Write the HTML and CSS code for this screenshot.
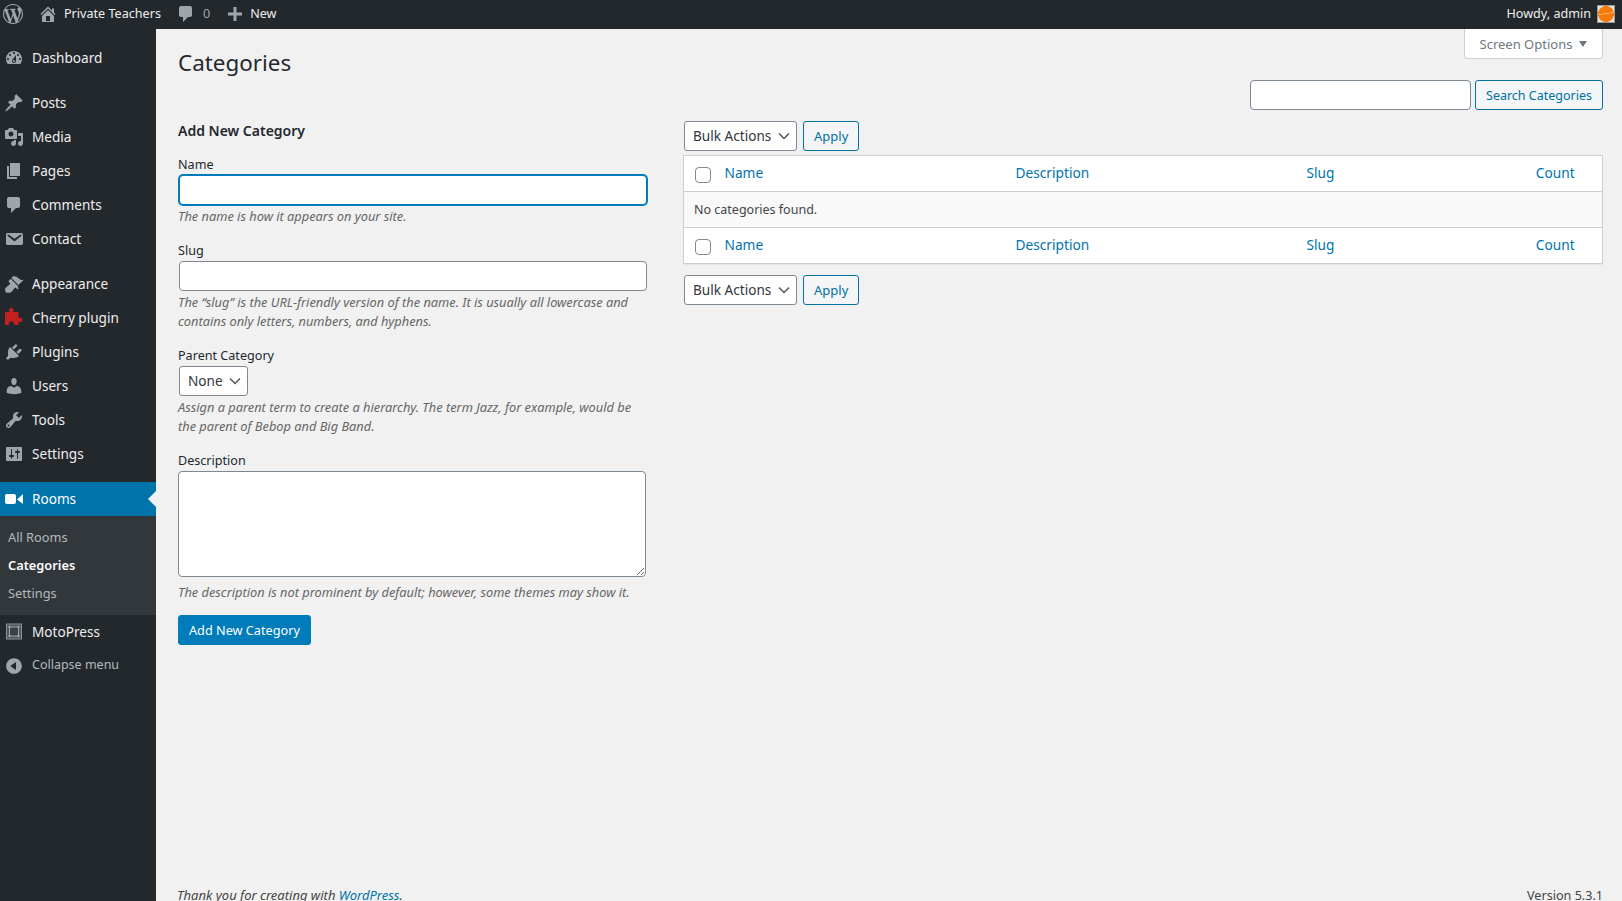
FILE: index.html
```html
<!DOCTYPE html>
<html lang="en">
<head>
    <meta charset="UTF-8">
    <meta name="viewport" content="width=device-width, initial-scale=1.0">
    <title>Categories</title>
    <link rel="stylesheet" href="styles.css">
</head>
<body>
    <!-- Admin bar -->
    <header class="adminbar">
        <a class="bar-item bar-logo" href="#"><svg class="bar-icon logo-icon" viewBox="0 0 20 20"><path d="M20 10c0-5.51-4.49-10-10-10C4.48 0 0 4.49 0 10c0 5.52 4.48 10 10 10 5.51 0 10-4.48 10-10zM7.78 15.37L4.37 6.22c.55-.02 1.17-.08 1.17-.08.5-.06.44-1.13-.06-1.11 0 0-1.45.11-2.37.11-.18 0-.37 0-.58-.01C4.12 2.69 6.87 1.11 10 1.11c2.33 0 4.45.87 6.05 2.34-.68-.11-1.65.39-1.65 1.58 0 .74.45 1.36.9 2.1.35.61.55 1.36.55 2.46 0 1.49-1.4 5-1.4 5l-3.03-8.37c.54-.02.82-.17.82-.17.5-.05.44-1.25-.06-1.22 0 0-1.44.12-2.38.12-.87 0-2.33-.12-2.33-.12-.5-.03-.56 1.2-.06 1.22l.92.08 1.26 3.41zM17.41 10c.24-.64.74-1.87.43-4.25.7 1.29 1.05 2.71 1.05 4.25 0 3.29-1.73 6.24-4.4 7.78.97-2.59 1.94-5.2 2.92-7.78zM6.1 18.09C3.12 16.65 1.11 13.53 1.11 10c0-1.3.23-2.48.72-3.59C3.25 10.3 4.67 14.2 6.1 18.09zm4.03-6.63l2.58 6.98c-.86.29-1.76.45-2.71.45-.79 0-1.57-.11-2.29-.33.81-2.38 1.62-4.74 2.42-7.1z"/></svg></a>
        <a class="bar-item bar-site" href="#"><svg class="bar-icon" viewBox="0 0 20 20"><path d="M16 8.5l1.53 1.53-1.06 1.06L10 4.62l-6.47 6.47-1.06-1.06L10 2.5l4 4v-2h2v4zm-6-2.46l6 5.99V18H4v-5.97zM12 17v-5H8v5h4z"/></svg>Private Teachers</a>
        <a class="bar-item bar-comments" href="#"><svg class="bar-icon" viewBox="0 0 20 20"><path d="M5 2h9c1.1 0 2 .9 2 2v7c0 1.1-.9 2-2 2h-2l-5 5v-5H5c-1.1 0-2-.9-2-2V4c0-1.1.9-2 2-2z"/></svg><span class="bar-count">0</span></a>
        <a class="bar-item bar-new" href="#"><svg class="bar-icon" viewBox="0 0 20 20"><path d="M3 8.5h5.5V3h3v5.500H17v3h-5.500V17h-3v-5.500H3z"/></svg>New</a>
        <a class="bar-item bar-user" href="#">Howdy, admin<span class="avatar"></span></a>
    </header>

    <div class="wrap">
        <!-- Sidebar -->
        <nav class="sidebar">
            <ul class="menu">
                <li class="menu-item"><svg class="menu-icon" viewBox="0 0 20 20"><path d="M3.76 16h12.48c1.1-1.37 1.76-3.11 1.76-5 0-4.42-3.58-8-8-8s-8 3.58-8 8c0 1.89.66 3.63 1.76 5zM10 4c.55 0 1 .45 1 1s-.45 1-1 1-1-.45-1-1 .45-1 1-1zM6 6c.55 0 1 .45 1 1s-.45 1-1 1-1-.45-1-1 .45-1 1-1zm8 0c.55 0 1 .45 1 1s-.45 1-1 1-1-.45-1-1 .45-1 1-1zm-5.370 5.550L12 7v6c0 1.100-.9 2-2 2s-2-.9-2-2c0-.57.24-1.080.63-1.450zM4 10c.55 0 1 .45 1 1s-.45 1-1 1-1-.45-1-1 .45-1 1-1zm12 0c.55 0 1 .45 1 1s-.45 1-1 1-1-.45-1-1 .45-1 1-1zm-5 3c0-.55-.45-1-1-1s-1 .45-1 1 .45 1 1 1 1-.45 1-1z" fill-rule="evenodd"/></svg>Dashboard</li>
                <li class="menu-sep"></li>
                <li class="menu-item"><svg class="menu-icon" viewBox="0 0 20 20"><path d="M10.44 3.020l1.820-1.820 6.360 6.350-1.830 1.820c-1.050-.68-2.480-.57-3.410.36l-.75.75c-.92.93-1.040 2.350-.35 3.410l-1.830 1.820-2.410-2.410-2.800 2.790c-.42.42-3.380 2.710-3.800 2.290s1.860-3.390 2.280-3.810l2.790-2.790L4.100 9.360l1.830-1.820c1.050.69 2.480.57 3.400-.36l.75-.75c.93-.92 1.050-2.350.36-3.410z"/></svg>Posts</li>
                <li class="menu-item"><svg class="menu-icon" viewBox="0 0 20 20"><path d="M13 11V4c0-.55-.45-1-1-1h-1.670L9 1H5L3.670 3H2c-.55 0-1 .45-1 1v7c0 .55.45 1 1 1h10c.55 0 1-.45 1-1zM7 4.500c1.380 0 2.500 1.120 2.500 2.500S8.380 9.500 7 9.500 4.500 8.380 4.500 7 5.620 4.500 7 4.500zM14 6h5v10.500c0 1.380-1.120 2.500-2.500 2.500S14 17.880 14 16.500s1.120-2.500 2.500-2.500c.17 0 .34.02.5.05V9h-3V6zm-4 8.050V13h2v3.500c0 1.380-1.120 2.500-2.500 2.500S7 17.880 7 16.500 8.120 14 9.500 14c.17 0 .34.02.5.05z"/></svg>Media</li>
                <li class="menu-item"><svg class="menu-icon" viewBox="0 0 20 20"><path d="M6 15V2h10v13H6zm-1 1h8v2H3V5h2v11z"/></svg>Pages</li>
                <li class="menu-item"><svg class="menu-icon" viewBox="0 0 20 20"><path d="M5 2h9c1.100 0 2 .9 2 2v7c0 1.100-.9 2-2 2h-2l-5 5v-5H5c-1.100 0-2-.9-2-2V4c0-1.100.9-2 2-2z"/></svg>Comments</li>
                <li class="menu-item"><svg class="menu-icon" viewBox="0 0 20 20"><path d="M3.870 4h13.250C18.370 4 19 4.590 19 5.790v8.420c0 1.190-.63 1.790-1.880 1.790H3.870c-1.250 0-1.880-.6-1.880-1.790V5.790c0-1.200.63-1.790 1.880-1.790zm6.620 8.600l6.740-5.530c.24-.2.43-.66.13-1.070-.29-.41-.82-.42-1.170-.17l-5.700 3.860L4.800 5.830c-.35-.25-.88-.24-1.170.17-.3.41-.11.87.13 1.070z"/></svg>Contact</li>
                <li class="menu-sep"></li>
                <li class="menu-item"><svg class="menu-icon" viewBox="0 0 20 20"><path d="M14.480 11.060L7.410 3.990l1.500-1.500c.5-.56 2.300-.47 3.510.32 1.210.8 1.430 1.280 2.910 2.100 1.180.64 2.450 1.260 4.450.85zm-.71.71L6.700 4.700 4.930 6.470c-.39.39-.39 1.020 0 1.410l1.060 1.060c.39.39.39 1.030 0 1.420-.6.6-1.430 1.110-2.210 1.690-.35.26-.7.53-1.010.84C1.430 13.230.4 14.960 1.800 18.200c3.240 1.400 4.970.37 6.300-.96.31-.31.58-.66.84-1.010.58-.78 1.090-1.610 1.690-2.210.39-.39 1.030-.39 1.420 0l1.060 1.060c.39.39 1.020.39 1.410 0z"/></svg>Appearance</li>
                <li class="menu-item"><svg class="menu-icon icon-cherry" viewBox="0 0 20 20"><path d="M1 4H5C5.500 4 5.500 3.500 5.300 3A2.200 2.200 0 1 1 9.300 3C9 3.500 9 4 9.500 4H14.500V9.500C14.500 10 15 10 15.500 9.900A2.200 2.200 0 1 1 15.500 14C15 13.900 14.500 14 14.500 14.500V17H10V15A2.700 2.700 0 0 0 5 15V17H1Z"/></svg>Cherry plugin</li>
                <li class="menu-item"><svg class="menu-icon" viewBox="0 0 20 20"><path d="M13.110 4.360L9.870 7.600 8 5.730l3.240-3.240c.35-.34 1.050-.2 1.560.32.52.51.66 1.210.31 1.550zm-8 1.770l.91-1.120 9.010 9.010-1.190.84c-.71.71-2.630 1.160-3.820 1.160H6.140L4.900 17.260c-.59.59-1.540.59-2.120 0-.59-.58-.59-1.530 0-2.120l1.240-1.240v-3.880c0-1.130.4-3.190 1.090-3.890zm7.260 3.970l3.240-3.240c.34-.35 1.040-.21 1.550.31.52.51.66 1.210.31 1.550l-3.240 3.250z"/></svg>Plugins</li>
                <li class="menu-item"><svg class="menu-icon" viewBox="0 0 20 20"><path d="M10 9.250c-2.270 0-2.730-3.440-2.730-3.440C7 4.020 7.820 2 9.970 2c2.160 0 2.980 2.020 2.710 3.810 0 0-.41 3.440-2.680 3.440zm0 2.570L12.720 10c2.390 0 4.520 2.330 4.520 4.530v2.490s-3.650 1.130-7.240 1.130c-3.650 0-7.240-1.130-7.240-1.130v-2.490c0-2.250 1.940-4.480 4.470-4.480z"/></svg>Users</li>
                <li class="menu-item"><svg class="menu-icon" viewBox="0 0 20 20"><path d="M16.680 9.770c-1.340 1.340-3.300 1.670-4.950.99l-5.410 6.520c-.99.99-2.590.99-3.580 0s-.99-2.590 0-3.570l6.520-5.420c-.68-1.650-.35-3.610.99-4.950 1.280-1.280 3.120-1.620 4.720-1.060l-2.890 2.890 2.820 2.820 2.860-2.870c.53 1.580.18 3.390-1.080 4.650zM3.810 16.210c.4.39 1.040.39 1.430 0 .4-.4.4-1.040 0-1.430-.39-.4-1.030-.4-1.430 0-.39.39-.39 1.030 0 1.430z"/></svg>Tools</li>
                <li class="menu-item"><svg class="menu-icon" viewBox="0 0 20 20"><path d="M18 16V4c0-.55-.45-1-1-1H3c-.55 0-1 .45-1 1v12c0 .55.45 1 1 1h14c.55 0 1-.45 1-1zM8 11h1c.55 0 1 .45 1 1s-.45 1-1 1H8v1.500c0 .28-.22.5-.5.5s-.5-.22-.5-.5V13H6c-.55 0-1-.45-1-1s.45-1 1-1h1V5.500c0-.28.22-.5.5-.5s.5.22.5.5V11zm5-2h-1c-.55 0-1-.45-1-1s.45-1 1-1h1V5.500c0-.28.22-.5.5-.5s.5.22.5.5V7h1c.55 0 1 .45 1 1s-.45 1-1 1h-1v5.500c0 .28-.22.5-.5.5s-.5-.22-.5-.5V9z"/></svg>Settings</li>
                <li class="menu-sep"></li>
                <li class="menu-item current"><svg class="menu-icon" viewBox="0 0 20 20"><path d="M12 13V7c0-1.100-.9-2-2-2H3c-1.100 0-2 .9-2 2v6c0 1.100.9 2 2 2h7c1.100 0 2-.9 2-2zm1-2.500l6 4.500V5z"/></svg>Rooms</li>
                <li>
                    <ul class="submenu">
                        <li>All Rooms</li>
                        <li class="active">Categories</li>
                        <li>Settings</li>
                    </ul>
                </li>
                <li class="menu-item"><svg class="menu-icon icon-moto" viewBox="0 0 20 20"><rect x="2.500" y="2" width="15" height="15" fill="#50555a" stroke="#8c9196"/><rect x="5.500" y="5" width="9" height="9" fill="#3c4146" stroke="#a0a5aa"/><circle cx="5.500" cy="5" r="1.200"/><circle cx="14.500" cy="5" r="1.200"/><circle cx="5.500" cy="14" r="1.200"/><circle cx="14.500" cy="14" r="1.200"/></svg>MotoPress</li>
                <li class="menu-collapse"><svg class="menu-icon" viewBox="0 0 20 20"><path d="M10 2.160c4.330 0 7.840 3.510 7.840 7.840s-3.510 7.840-7.840 7.840S2.160 14.330 2.160 10 5.710 2.160 10 2.160zm2 11.720V6.120L6.180 9.970z"/></svg>Collapse menu</li>
            </ul>
        </nav>

        <main class="content">
            <div class="page-head">
                <h1>Categories</h1>
                <button class="screen-options" type="button">Screen Options<span class="caret"></span></button>
            </div>

            <form class="search-row" onsubmit="return false">
                <input class="text-input search-input" type="text">
                <button class="btn btn-search" type="submit">Search Categories</button>
            </form>

            <div class="columns">
                <!-- Add form -->
                <form class="add-form" onsubmit="return false">
                    <h2>Add New Category</h2>
                    <div class="field">
                        <label for="tag-name">Name</label>
                        <input class="text-input focused" id="tag-name" type="text">
                        <p class="hint">The name is how it appears on your site.</p>
                    </div>
                    <div class="field">
                        <label for="tag-slug">Slug</label>
                        <input class="text-input" id="tag-slug" type="text">
                        <p class="hint">The “slug” is the URL-friendly version of the name. It is usually all lowercase and contains only letters, numbers, and hyphens.</p>
                    </div>
                    <div class="field">
                        <label for="parent">Parent Category</label>
                        <select class="select parent-select" id="parent"><option>None</option></select>
                        <p class="hint">Assign a parent term to create a hierarchy. The term Jazz, for example, would be the parent of Bebop and Big Band.</p>
                    </div>
                    <div class="field field-last">
                        <label for="tag-desc">Description</label>
                        <textarea class="text-input desc-input" id="tag-desc"></textarea>
                        <p class="hint">The description is not prominent by default; however, some themes may show it.</p>
                    </div>
                    <button class="btn-primary" type="submit">Add New Category</button>
                </form>

                <!-- List -->
                <div class="list">
                    <div class="tablenav top">
                        <select class="select bulk-select"><option>Bulk Actions</option></select>
                        <button class="btn" type="button">Apply</button>
                    </div>
                    <table class="list-table">
                        <thead>
                            <tr>
                                <th class="col-check"><span class="checkbox"></span></th>
                                <th class="col-name"><a href="#">Name</a></th>
                                <th class="col-desc"><a href="#">Description</a></th>
                                <th class="col-slug"><a href="#">Slug</a></th>
                                <th class="col-count"><a href="#">Count</a></th>
                            </tr>
                        </thead>
                        <tbody>
                            <tr><td class="no-items" colspan="5">No categories found.</td></tr>
                        </tbody>
                        <tfoot>
                            <tr>
                                <th class="col-check"><span class="checkbox"></span></th>
                                <th class="col-name"><a href="#">Name</a></th>
                                <th class="col-desc"><a href="#">Description</a></th>
                                <th class="col-slug"><a href="#">Slug</a></th>
                                <th class="col-count"><a href="#">Count</a></th>
                            </tr>
                        </tfoot>
                    </table>
                    <div class="tablenav bottom">
                        <select class="select bulk-select"><option>Bulk Actions</option></select>
                        <button class="btn" type="button">Apply</button>
                    </div>
                </div>
            </div>

            <footer class="page-footer">
                <span class="thanks">Thank you for creating with <a href="#">WordPress</a>.</span>
                <span class="version">Version 5.3.1</span>
            </footer>
        </main>
    </div>
</body>
</html>
```

FILE: styles.css
```css
* {
    margin: 0;
    padding: 0;
    box-sizing: border-box;
}

html, body {
    height: 100%;
    overflow: hidden;
}

body {
    font-family: 'Noto Sans', sans-serif;
    font-size: 13px;
    background: #f1f1f1;
    color: #444;
    display: flex;
    flex-direction: column;
}

a {
    color: #0073aa;
    text-decoration: none;
}

ul {
    list-style: none;
}

/* Admin bar */
.adminbar {
    height: 29px;
    flex: none;
    padding-bottom: 2px;
    background: #23282d;
    display: flex;
    align-items: center;
    font-size: 12.6px;
}

.bar-item {
    display: flex;
    align-items: center;
    color: #eee;
}

.bar-icon {
    width: 20px;
    height: 20px;
    fill: #a0a5aa;
}

.bar-logo {
    margin-left: 3px;
}

.bar-site {
    margin-left: 15px;
}

.bar-site .bar-icon {
    margin-right: 6px;
}

.bar-comments {
    margin-left: 15px;
}

.bar-count {
    margin-left: 7px;
    color: #a0a5aa;
}

.bar-new {
    margin-left: 15px;
}

.bar-new .bar-icon {
    margin-right: 5px;
}

.bar-user {
    margin-left: auto;
    margin-right: 7px;
}

.avatar {
    width: 18px;
    height: 18px;
    margin-left: 6px;
    border: 1px solid #999;
    background:
        linear-gradient(172deg, transparent 44%, rgba(255, 220, 170, 0.7) 47%, transparent 52%),
        radial-gradient(circle, #f57c0a 0, #f57c0a 68%, #e9e2d8 72%);
}

/* Layout */
.wrap {
    flex: 1;
    display: flex;
    min-height: 0;
}

.sidebar {
    width: 156px;
    flex: none;
    background: #23282d;
    padding-top: 12px;
    font-size: 13.6px;
}

.menu-item {
    position: relative;
    height: 34px;
    padding-bottom: 2px;
    display: flex;
    align-items: center;
    color: #eee;
}

.menu-icon {
    width: 20px;
    height: 20px;
    margin: 2px 8px 0 4px;
    flex: none;
    fill: #a0a5aa;
}

.icon-cherry {
    fill: #c21f1f;
}

.icon-moto {
    fill: #a0a5aa;
}

.menu-sep {
    height: 11px;
}

.menu-item.current {
    background: #0073aa;
    color: #fff;
}

.menu-item.current .menu-icon {
    fill: #fff;
}

.menu-item.current::after {
    content: "";
    position: absolute;
    right: 0;
    top: 50%;
    margin-top: -8px;
    border: 8px solid transparent;
    border-right-color: #f1f1f1;
    border-left-width: 0;
}

.submenu {
    background: #32373c;
    padding: 7px 0 8px;
    font-size: 12.8px;
    color: #b4b9be;
}

.submenu li {
    height: 28px;
    line-height: 28px;
    padding-left: 8px;
}

.submenu .active {
    color: #fff;
    font-weight: 600;
}

.menu-collapse {
    height: 32px;
    padding-bottom: 2px;
    display: flex;
    align-items: center;
    color: #b4b9be;
    font-size: 12.5px;
}

.menu-collapse .menu-icon {
    margin-top: 4px;
}

/* Content */
.content {
    flex: 1;
    min-width: 0;
    padding: 0 19px 0 22px;
    display: flex;
    flex-direction: column;
}

.page-head {
    height: 51px;
    flex: none;
    display: flex;
    justify-content: space-between;
    align-items: flex-start;
}

h1 {
    font-size: 22.4px;
    font-weight: 400;
    line-height: 30px;
    color: #23282d;
    margin-top: 19px;
}

.screen-options {
    height: 30px;
    width: 139px;
    font: inherit;
    color: #72777c;
    background: #fff;
    border: 1px solid #ccd0d4;
    border-top: 0;
    border-radius: 0 0 4px 4px;
    display: flex;
    align-items: center;
    justify-content: center;
}

.caret {
    margin-left: 7px;
    border: 4.5px solid transparent;
    border-top: 6px solid #72777c;
    border-bottom: 0;
}

.search-row {
    display: flex;
    justify-content: flex-end;
    gap: 4px;
}

.text-input {
    display: block;
    height: 30px;
    font: inherit;
    background: #fff;
    border: 1px solid #7e8993;
    border-radius: 4px;
    outline: none;
}

.search-input {
    width: 221px;
}

.btn, .btn-primary {
    height: 30px;
    padding: 0 10px;
    font: inherit;
    border-radius: 3px;
    cursor: pointer;
}

.btn {
    color: #0071a1;
    background: #f3f5f6;
    border: 1px solid #0071a1;
}

.btn-search {
    font-size: 12.5px;
}

.btn-primary {
    font-size: 12.7px;
    color: #fff;
    background: #007cba;
    border: 1px solid #007cba;
}

.columns {
    display: grid;
    grid-template-columns: 469px 920px;
    gap: 36px;
    margin-top: 11px;
}

/* Add form */
h2 {
    font-size: 14px;
    font-weight: 600;
    line-height: 20px;
    color: #23282d;
    margin-bottom: 14px;
}

.field {
    margin-bottom: 15px;
}

.field-last {
    margin-bottom: 13px;
}

.field label {
    display: block;
    font-size: 12.6px;
    line-height: 20px;
    color: #23282d;
}

.field .text-input {
    width: 468px;
    margin: 0 1px;
}

.field .focused {
    border-color: #007cba;
    box-shadow: 0 0 0 1px #007cba;
}

.field .desc-input {
    width: 468px;
    height: 106px;
    margin: 0;
    resize: vertical;
}

.hint {
    margin-top: 2px;
    font-size: 12.8px;
    font-style: italic;
    line-height: 19px;
    color: #666;
}

.desc-input + .hint {
    margin-top: 6px;
}

.select {
    display: block;
    height: 30px;
    padding: 0 20px 2px 8px;
    font: inherit;
    font-size: 13.6px;
    color: #32373c;
    border: 1px solid #7e8993;
    border-radius: 3px;
    appearance: none;
    background: #fff url("data:image/svg+xml,%3Csvg xmlns='http://www.w3.org/2000/svg' width='16' height='16' viewBox='0 0 16 16'%3E%3Cpath d='M3 5.500l5 5 5-5' fill='none' stroke='%23555' stroke-width='1.500'/%3E%3C/svg%3E") no-repeat right 4px center;
}

.parent-select {
    width: 69px;
    margin-left: 1px;
}

/* List */
.tablenav {
    display: flex;
    gap: 6px;
    margin-left: 1px;
}

.tablenav.top {
    margin-bottom: 4px;
}

.tablenav.bottom {
    margin-top: 11px;
}

.bulk-select {
    width: 113px;
}

.list-table {
    width: 100%;
    border-collapse: collapse;
    table-layout: fixed;
    background: #fff;
    border: 1px solid #ccd0d4;
    box-shadow: 0 1px 1px rgba(0, 0, 0, 0.04);
}

.list-table th, .list-table td {
    height: 36px;
    padding: 0 10px 2px;
    font-weight: 400;
    text-align: left;
    font-size: 13.7px;
}

.list-table thead th {
    border-bottom: 1px solid #ccd0d4;
}

.list-table tfoot th {
    border-top: 1px solid #ccd0d4;
}

.col-check {
    width: 31px;
}

.col-name, .col-desc {
    width: 291px;
}

.list-table .col-count {
    width: 94px;
    text-align: center;
}

.list-table .no-items {
    padding-bottom: 0;
    background: #f9f9f9;
    font-size: 12.5px;
}

.checkbox {
    display: block;
    width: 16px;
    height: 16px;
    margin: 5px 0 0 1px;
    background: #fff;
    border: 1px solid #7e8993;
    border-radius: 4px;
}

/* Footer */
.page-footer {
    margin-top: auto;
    height: 13px;
    margin-left: -1px;
    display: flex;
    justify-content: space-between;
    line-height: 15px;
}

.thanks {
    font-style: italic;
}

.thanks a {
    text-decoration: underline;
}

.version {
    font-size: 12.6px;
}
```
